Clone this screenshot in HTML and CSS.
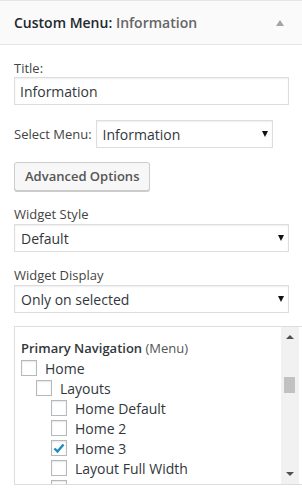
FILE: index.html
```html
<!DOCTYPE html>
<html lang="en">
<head>
    <meta charset="UTF-8">
    <meta name="viewport" content="width=device-width, initial-scale=1.0">
    <title>Custom Menu Widget</title>
    <link rel="stylesheet" href="styles.css">
</head>
<body>
    <div class="widget">
        <div class="widget-top">
            <h3 class="widget-title">Custom Menu: <span class="in-title">Information</span></h3>
            <span class="toggle"></span>
        </div>

        <div class="widget-inside">
            <p class="field first">
                <label for="title">Title:</label>
                <input type="text" id="title" class="wide" value="Information">
            </p>

            <p class="field row">
                <label for="menu">Select Menu:</label>
                <span class="select-wrap menu-select">
                    <select id="menu">
                        <option>Information</option>
                        <option>Primary Navigation</option>
                    </select>
                </span>
            </p>

            <p class="field">
                <button type="button" class="button">Advanced Options</button>
            </p>

            <p class="field">
                <label for="style">Widget Style</label>
                <span class="select-wrap">
                    <select id="style">
                        <option>Default</option>
                    </select>
                </span>
            </p>

            <p class="field last">
                <label for="display">Widget Display</label>
                <span class="select-wrap">
                    <select id="display">
                        <option>Only on selected</option>
                        <option>Everywhere</option>
                    </select>
                </span>
            </p>

            <div class="menu-box">
                <div class="menu-list">
                    <h4 class="menu-name">Primary Navigation <span>(Menu)</span></h4>
                    <label class="item"><span class="check"></span>Home</label>
                    <label class="item lvl1"><span class="check"></span>Layouts</label>
                    <label class="item lvl2"><span class="check"></span>Home Default</label>
                    <label class="item lvl2"><span class="check"></span>Home 2</label>
                    <label class="item lvl2"><span class="check on"><svg width="14" height="14" viewBox="0 0 14 14"><path d="M2.5 7.5 L5.5 10.5 L11.5 3.5" fill="none" stroke="#1e8cbe" stroke-width="2.4"/></svg></span>Home 3</label>
                    <label class="item lvl2"><span class="check"></span>Layout Full Width</label>
                    <label class="item lvl2"><span class="check"></span></label>
                </div>
                <div class="scrollbar">
                    <span class="arrow up"></span>
                    <div class="track"><span class="thumb"></span></div>
                    <span class="arrow down"></span>
                </div>
            </div>
        </div>
    </div>
</body>
</html>
```

FILE: styles.css
```css
body {
    margin: 0;
    background-color: #fff;
    font-family: "Open Sans", "Liberation Sans", sans-serif;
    font-size: 13px;
    color: #444;
    overflow: hidden;
}

.widget-top {
    display: flex;
    align-items: center;
    justify-content: space-between;
    height: 43px;
    padding: 0 14px 0 14px;
    background-color: #fafafa;
    border-top: 1px solid #e5e5e5;
    border-bottom: 1px solid #e5e5e5;
}

.widget-title {
    margin: 0;
    font-size: 14px;
    font-weight: 600;
    color: #23282d;
}

.in-title {
    color: #666;
}

.toggle {
    width: 0;
    height: 0;
    margin-right: 4px;
    border-left: 4px solid transparent;
    border-right: 4px solid transparent;
    border-bottom: 6px solid #a0a5aa;
}

.widget-inside {
    padding: 14px 13px 0 14px;
}

.field {
    margin: 0 0 14px;
}

.field.first {
    margin-bottom: 15px;
}

.field.last {
    margin-bottom: 13px;
}

.field label {
    display: block;
    line-height: 18px;
}

.field.row {
    display: flex;
    align-items: center;
    gap: 4px;
}

.field.row label {
    display: inline;
}

input.wide,
select {
    display: block;
    width: 100%;
    height: 28px;
    box-sizing: border-box;
    margin: 0;
    border: 1px solid #ddd;
    border-radius: 0;
    box-shadow: inset 0 1px 2px rgba(0, 0, 0, 0.07);
    background-color: #fff;
    font-family: inherit;
    font-size: 14px;
    color: #32373c;
}

input.wide {
    padding: 0 5px;
}

select {
    -webkit-appearance: none;
    appearance: none;
    padding: 0 24px 0 6px;
}

.select-wrap {
    position: relative;
    display: block;
    margin-top: 1px;
}

.select-wrap::after {
    content: "";
    position: absolute;
    right: 5px;
    top: 11px;
    border-left: 3px solid transparent;
    border-right: 3px solid transparent;
    border-top: 6px solid #111;
    pointer-events: none;
}

.menu-select {
    width: 177px;
    margin-top: 0;
}

.button {
    height: 29px;
    padding: 0 10px 1px;
    font-family: inherit;
    font-size: 13px;
    font-weight: 600;
    color: #555;
    background-color: #f7f7f7;
    border: 1px solid #ccc;
    border-radius: 3px;
    box-shadow: 0 1px 0 #ccc;
    cursor: pointer;
}

.menu-box {
    display: flex;
    width: 292px;
    height: 157px;
    border: 1px solid #ddd;
    overflow: hidden;
}

.menu-list {
    flex: 1;
    padding: 12px 0 0 6px;
}

.menu-name {
    margin: 0;
    font-size: 13px;
    font-weight: 600;
    line-height: 19px;
    color: #32373c;
}

.menu-name span {
    font-weight: 400;
    color: #555;
}

.item {
    display: flex;
    align-items: center;
    height: 20px;
    font-size: 14px;
    color: #32373c;
}

.item.lvl1 {
    padding-left: 15px;
}

.item.lvl2 {
    padding-left: 30px;
}

.check {
    display: flex;
    align-items: center;
    justify-content: center;
    width: 16px;
    height: 16px;
    box-sizing: border-box;
    margin-right: 8px;
    border: 1px solid #b4b9be;
    background-color: #fff;
    box-shadow: inset 0 1px 2px rgba(0, 0, 0, 0.1);
}

.scrollbar {
    display: flex;
    flex-direction: column;
    width: 18px;
    margin-right: 8px;
    background-color: #f1f1f1;
}

.arrow {
    align-self: center;
    width: 0;
    height: 0;
    border-left: 4px solid transparent;
    border-right: 4px solid transparent;
}

.arrow.up {
    margin: 8px 0 4px;
    border-bottom: 4px solid #505050;
}

.arrow.down {
    margin: 4px 0 8px;
    border-top: 4px solid #505050;
}

.track {
    flex: 1;
    padding-top: 34px;
}

.thumb {
    display: block;
    width: 11px;
    height: 16px;
    margin-left: 3px;
    background-color: #c1c1c1;
}
```
